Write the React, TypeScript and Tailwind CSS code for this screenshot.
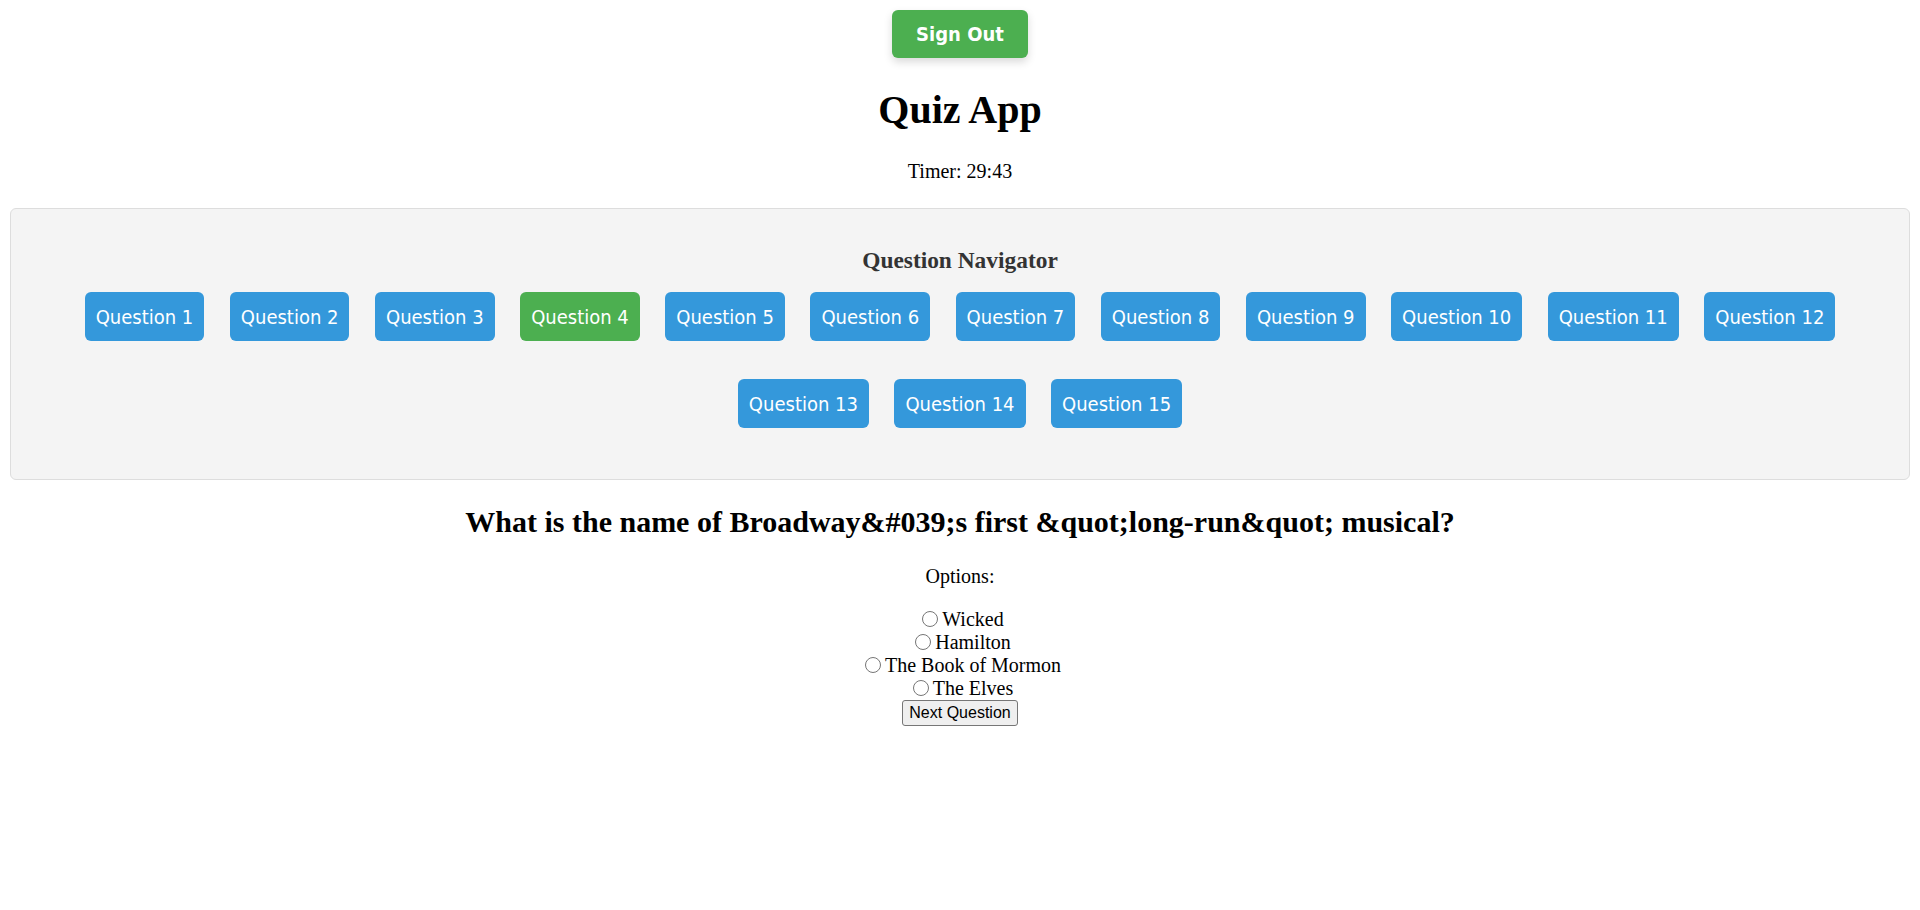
import { useState } from "react";

const QUESTIONS = Array.from({ length: 15 }, (_, i) => i + 1);
const OPTIONS = ["Wicked", "Hamilton", "The Book of Mormon", "The Elves"];

export default function App() {
  const [current, setCurrent] = useState(4);
  const [picked, setPicked] = useState<string | null>(null);

  return (
    <div className="min-h-screen bg-white px-[10px] pt-[10px] text-center font-['Liberation_Serif',serif] text-[20px] text-black">
      {/* Header */}
      <button className="rounded-[6px] bg-[#4caf50] px-[24px] py-[12px] font-['DejaVu_Sans_Condensed','DejaVu_Sans',sans-serif] text-[20px] leading-[24px] font-bold text-white shadow-[0_4px_8px_rgba(0,0,0,0.15)]">
        Sign Out
      </button>
      <h1 className="mt-[29px] text-[40px] leading-[46px] font-bold">Quiz App</h1>
      <p className="mt-[27px] leading-[23px]">Timer: 29:43</p>

      {/* Question Navigator */}
      <div className="mt-[25px] rounded-[6px] border border-[#dddddd] bg-[#f4f4f4] px-[25px] pt-[38px] pb-[51px]">
        <h3 className="text-[23.4px] leading-[27px] font-bold text-[#333333]">Question Navigator</h3>
        <div className="mt-[18px] flex flex-wrap justify-center gap-x-[25.5px] gap-y-[38px]">
          {QUESTIONS.map((n) => (
            <button
              key={n}
              onClick={() => setCurrent(n)}
              className={`rounded-[6px] px-[11px] py-[12.5px] font-['DejaVu_Sans_Condensed','DejaVu_Sans',sans-serif] text-[20px] leading-[24px] text-white ${
                n === current ? "bg-[#4caf50]" : "bg-[#3498db]"
              }`}
            >
              Question {n}
            </button>
          ))}
        </div>
      </div>

      {/* Question */}
      <h2 className="mt-[25px] text-[30px] leading-[34px] font-bold">
        What is the name of Broadway&amp;#039;s first &amp;quot;long-run&amp;quot; musical?
      </h2>
      <p className="mt-[26px] leading-[23px]">Options:</p>
      <div className="mt-[20px]">
        {OPTIONS.map((o) => (
          <div key={o} className="leading-[23px]">
            <label>
              <input
                type="radio"
                name="opt"
                checked={picked === o}
                onChange={() => setPicked(o)}
                className="mr-[4px] ml-[6px] h-[16px] w-[16px] align-[-1px]"
              />
              {o}
            </label>
          </div>
        ))}
      </div>
      <button className="mx-auto block rounded-[3px] border border-[#767676] bg-[#efefef] px-[6px] py-[2px] font-['Liberation_Sans',Arial,sans-serif] text-[16px] leading-[20px] text-black">
        Next Question
      </button>
    </div>
  );
}
